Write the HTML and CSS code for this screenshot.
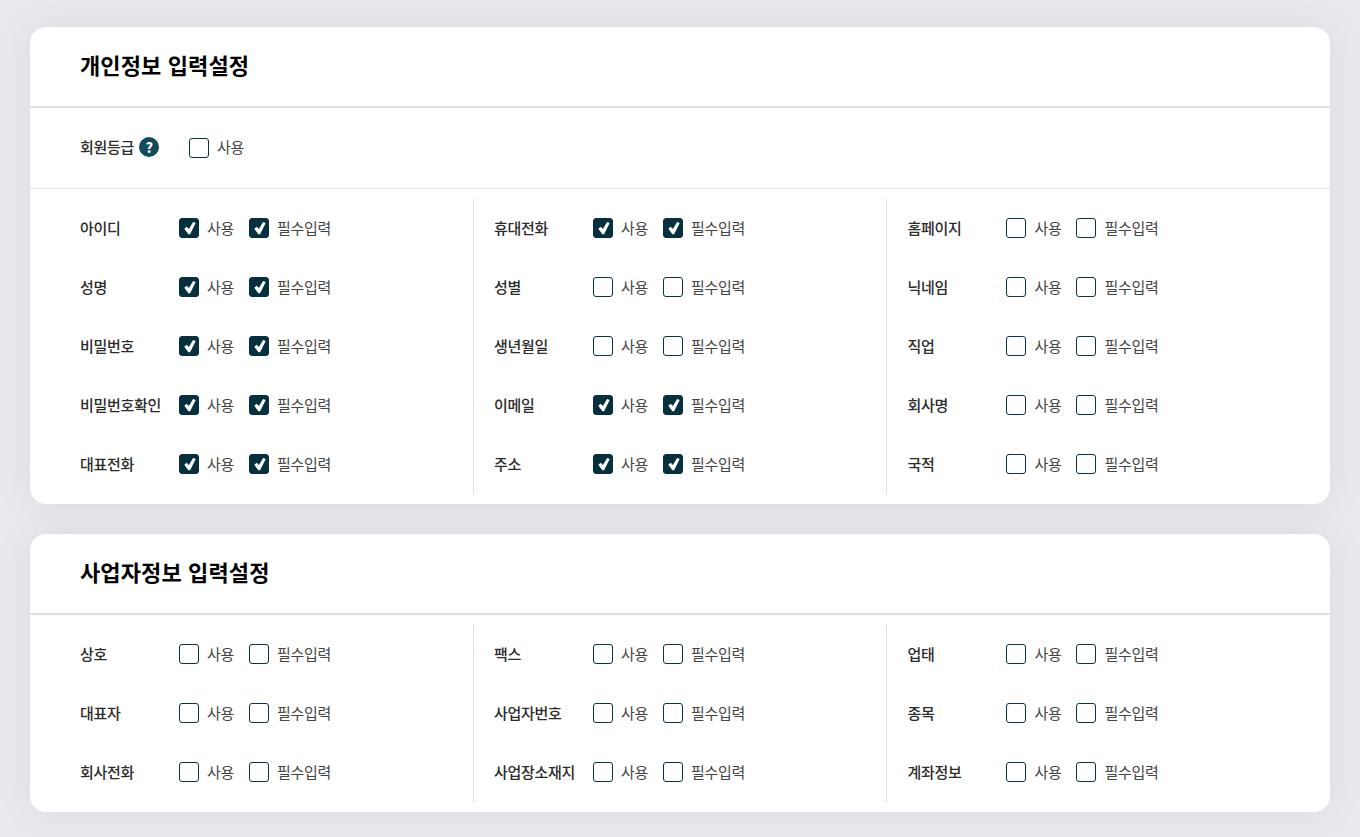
FILE: index.html
```html
<!DOCTYPE html>
<html lang="ko">
<head>
<meta charset="utf-8">
<title>입력설정</title>
<link rel="stylesheet" href="styles.css">
</head>
<body>
<svg class="defs" width="0" height="0"><symbol id="chk" viewBox="0 0 20 20"><path d="M5.3 10.8 7.7 8.7 9.9 11 14.1 3.9 16.7 5.1 11.1 16.2 9.4 16.2Z" fill="#fff"/></symbol></svg>
<section class="card">
  <h2 class="card-title">개인정보 입력설정</h2>
  <div class="grade-row">
    <span class="grade-label">회원등급</span><span class="help">?</span>
    <label class="opt grade-opt"><span class="box"></span>사용</label>
  </div>
  <div class="grid">
    <div class="col">
      <div class="row"><span class="name">아이디</span><label class="opt"><span class="box on"><svg><use href="#chk"/></svg></span>사용</label><label class="opt"><span class="box on"><svg><use href="#chk"/></svg></span>필수입력</label></div>
      <div class="row"><span class="name">성명</span><label class="opt"><span class="box on"><svg><use href="#chk"/></svg></span>사용</label><label class="opt"><span class="box on"><svg><use href="#chk"/></svg></span>필수입력</label></div>
      <div class="row"><span class="name">비밀번호</span><label class="opt"><span class="box on"><svg><use href="#chk"/></svg></span>사용</label><label class="opt"><span class="box on"><svg><use href="#chk"/></svg></span>필수입력</label></div>
      <div class="row"><span class="name">비밀번호확인</span><label class="opt"><span class="box on"><svg><use href="#chk"/></svg></span>사용</label><label class="opt"><span class="box on"><svg><use href="#chk"/></svg></span>필수입력</label></div>
      <div class="row"><span class="name">대표전화</span><label class="opt"><span class="box on"><svg><use href="#chk"/></svg></span>사용</label><label class="opt"><span class="box on"><svg><use href="#chk"/></svg></span>필수입력</label></div>
    </div>
    <div class="col">
      <div class="row"><span class="name">휴대전화</span><label class="opt"><span class="box on"><svg><use href="#chk"/></svg></span>사용</label><label class="opt"><span class="box on"><svg><use href="#chk"/></svg></span>필수입력</label></div>
      <div class="row"><span class="name">성별</span><label class="opt"><span class="box"></span>사용</label><label class="opt"><span class="box"></span>필수입력</label></div>
      <div class="row"><span class="name">생년월일</span><label class="opt"><span class="box"></span>사용</label><label class="opt"><span class="box"></span>필수입력</label></div>
      <div class="row"><span class="name">이메일</span><label class="opt"><span class="box on"><svg><use href="#chk"/></svg></span>사용</label><label class="opt"><span class="box on"><svg><use href="#chk"/></svg></span>필수입력</label></div>
      <div class="row"><span class="name">주소</span><label class="opt"><span class="box on"><svg><use href="#chk"/></svg></span>사용</label><label class="opt"><span class="box on"><svg><use href="#chk"/></svg></span>필수입력</label></div>
    </div>
    <div class="col">
      <div class="row"><span class="name">홈페이지</span><label class="opt"><span class="box"></span>사용</label><label class="opt"><span class="box"></span>필수입력</label></div>
      <div class="row"><span class="name">닉네임</span><label class="opt"><span class="box"></span>사용</label><label class="opt"><span class="box"></span>필수입력</label></div>
      <div class="row"><span class="name">직업</span><label class="opt"><span class="box"></span>사용</label><label class="opt"><span class="box"></span>필수입력</label></div>
      <div class="row"><span class="name">회사명</span><label class="opt"><span class="box"></span>사용</label><label class="opt"><span class="box"></span>필수입력</label></div>
      <div class="row"><span class="name">국적</span><label class="opt"><span class="box"></span>사용</label><label class="opt"><span class="box"></span>필수입력</label></div>
    </div>
  </div>
</section>
<section class="card">
  <h2 class="card-title">사업자정보 입력설정</h2>
  <div class="grid">
    <div class="col">
      <div class="row"><span class="name">상호</span><label class="opt"><span class="box"></span>사용</label><label class="opt"><span class="box"></span>필수입력</label></div>
      <div class="row"><span class="name">대표자</span><label class="opt"><span class="box"></span>사용</label><label class="opt"><span class="box"></span>필수입력</label></div>
      <div class="row"><span class="name">회사전화</span><label class="opt"><span class="box"></span>사용</label><label class="opt"><span class="box"></span>필수입력</label></div>
    </div>
    <div class="col">
      <div class="row"><span class="name">팩스</span><label class="opt"><span class="box"></span>사용</label><label class="opt"><span class="box"></span>필수입력</label></div>
      <div class="row"><span class="name">사업자번호</span><label class="opt"><span class="box"></span>사용</label><label class="opt"><span class="box"></span>필수입력</label></div>
      <div class="row"><span class="name">사업장소재지</span><label class="opt"><span class="box"></span>사용</label><label class="opt"><span class="box"></span>필수입력</label></div>
    </div>
    <div class="col">
      <div class="row"><span class="name">업태</span><label class="opt"><span class="box"></span>사용</label><label class="opt"><span class="box"></span>필수입력</label></div>
      <div class="row"><span class="name">종목</span><label class="opt"><span class="box"></span>사용</label><label class="opt"><span class="box"></span>필수입력</label></div>
      <div class="row"><span class="name">계좌정보</span><label class="opt"><span class="box"></span>사용</label><label class="opt"><span class="box"></span>필수입력</label></div>
    </div>
  </div>
</section>
</body>
</html>
```
FILE: styles.css
```css
* { box-sizing: border-box; }
html, body { height: 100%; }
body {
  margin: 0;
  padding: 27px 30px 25px;
  background: #e9eaee;
  font-family: "Noto Sans CJK KR", "Noto Sans", sans-serif;
  color: #2b2b2b;
  overflow: hidden;
  display: flex;
  flex-direction: column;
  gap: 30px;
}
.defs { position: absolute; }
.card {
  background: #fff;
  border-radius: 16px;
  box-shadow: 0 0 40px rgba(0, 0, 0, .07);
}
.card-title {
  margin: 0;
  height: 81px;
  padding: 0 50px 5px;
  display: flex;
  align-items: center;
  border-bottom: 2px solid #dedfe1;
  font-size: 22px;
  font-weight: 700;
  letter-spacing: .12px;
  color: #000;
}
.grade-row {
  height: 81px;
  padding: 0 50px 2px;
  display: flex;
  align-items: center;
  border-bottom: 1px solid #e0e1e3;
  font-size: 15px;
  letter-spacing: -.3px;
}
.grade-label { font-weight: 500; padding-bottom: 1px; }
.help {
  width: 20px;
  height: 20px;
  margin-left: 5px;
  border-radius: 50%;
  background: #134a5e;
  color: #fff;
  font-size: 14px;
  font-weight: 900;
  display: flex;
  align-items: center;
  justify-content: center;
}
.grade-opt { margin-left: 30px; line-height: 20px; }
.grade-opt .box { margin-top: 1px; }
.grid {
  padding: 10px 30px;
  display: grid;
  grid-template-columns: 413px 413px 414px;
}
.col { padding-left: 20px; }
.col + .col { border-left: 1px solid #dedfe1; }
.col:last-child { padding-left: 20.45px; }
.row {
  height: 59px;
  padding-bottom: 3px;
  display: flex;
  align-items: center;
  gap: 15px;
  font-size: 15px;
  letter-spacing: -.3px;
}
.row .box { margin-top: 2px; }
.name { width: 84px; flex: none; font-weight: 500; white-space: nowrap; }
.opt { display: flex; align-items: center; gap: 8px; color: #444; }
.box {
  width: 20px;
  height: 20px;
  flex: none;
  border: 1px solid #0d3342;
  border-radius: 3px;
  background: #fff;
  position: relative;
}
.box.on { background: #07303f; border-color: #07303f; }
.box svg { position: absolute; left: -1px; top: -1px; width: 20px; height: 20px; display: block; }
```
